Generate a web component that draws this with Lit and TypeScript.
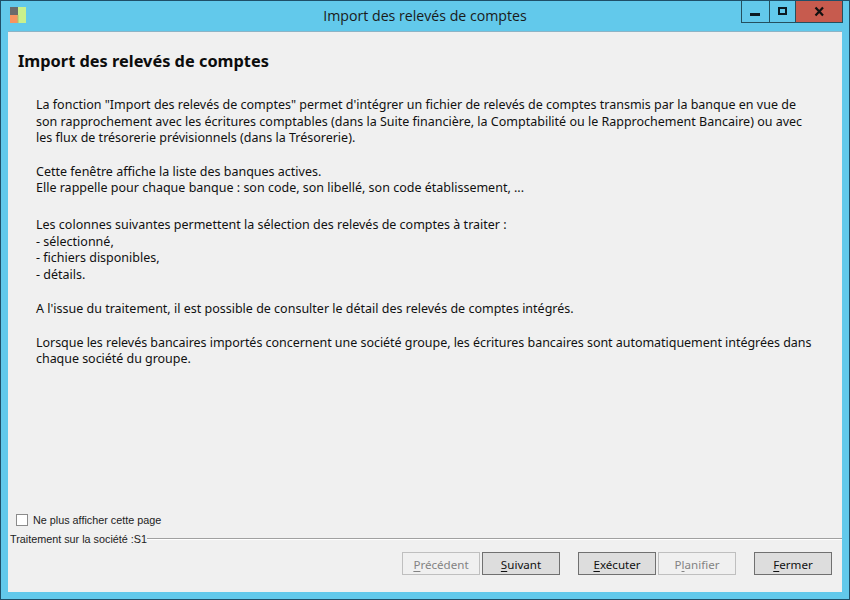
import { LitElement, html, css } from 'lit';
import { customElement } from 'lit/decorators.js';

@customElement('app-root')
export class AppRoot extends LitElement {
  static styles = css`
    :host {
      display: block;
      width: 850px;
      height: 600px;
      overflow: hidden;
    }
    .window {
      box-sizing: border-box;
      width: 850px;
      height: 600px;
      display: flex;
      flex-direction: column;
      background: #62c9eb;
      border: 1px solid #1f4f68;
      padding: 0 7px 7px 7px;
      font-family: 'Noto Sans', 'DejaVu Sans', sans-serif;
      color: #111;
    }
    .titlebar {
      height: 30px;
      flex: none;
      display: flex;
      align-items: flex-start;
      position: relative;
    }
    .app-icon {
      margin: 6px 0 0 2px;
      flex: none;
    }
    .title {
      position: absolute;
      left: 0;
      right: 0;
      top: 5px;
      text-align: center;
      font-size: 14.15px;
      line-height: 20px;
      color: #1a1a1a;
      font-family: 'Open Sans', 'Noto Sans', sans-serif;
    }
    .controls {
      margin-left: auto;
      margin-right: -1px;
      display: flex;
      height: 21px;
      border: 1px solid #24505f;
      border-top: none;
    }
    .ctl {
      display: flex;
      align-items: center;
      justify-content: center;
      width: 27px;
      border-right: 1px solid #24505f;
    }
    .ctl.narrow {
      width: 25px;
    }
    .ctl.close {
      width: 46px;
      border-right: none;
      background: #c75b4e;
    }
    .client {
      flex: 1;
      display: flex;
      flex-direction: column;
      background: #f0f0f0;
      border-top: 1px solid #8db4c6;
      min-height: 0;
    }
    h1 {
      margin: 18px 0 0 10px;
      font-size: 16.35px;
      line-height: 22px;
      font-weight: 700;
      color: #0c0c0c;
      font-family: 'Noto Sans', sans-serif;
    }
    .body {
      margin: 25px 10px 0 28px;
      font-size: 12.5px;
      line-height: 16.67px;
      white-space: nowrap;
      flex: 1;
    }
    p {
      margin: 0 0 16.67px 0;
    }
    p.wide {
      margin-bottom: 20px;
    }
    p.list {
      margin-bottom: 17.5px;
    }
    p.tight {
      letter-spacing: -0.04px;
    }
    .check-row {
      display: flex;
      align-items: center;
      gap: 5px;
      margin-left: 8px;
      font-family: 'Liberation Sans', Arial, sans-serif;
      font-size: 10.8px;
      line-height: 14px;
      color: #222;
      margin-bottom: 5px;
    }
    .box {
      width: 10px;
      height: 10px;
      box-sizing: content-box;
      background: #fff;
      border: 1px solid #8b8b8b;
    }
    .status {
      display: flex;
      align-items: center;
      margin-left: 2px;
      font-family: 'Liberation Sans', Arial, sans-serif;
      font-size: 10.8px;
      line-height: 14px;
      color: #222;
    }
    .status .rule {
      flex: 1;
      height: 1px;
      background: #a0a0a0;
      box-shadow: 0 1px 0 #fff;
      margin-bottom: 2px;
    }
    .buttons {
      display: flex;
      justify-content: flex-end;
      margin: 6px 10px 17px 0;
      gap: 2px;
    }
    button {
      box-sizing: border-box;
      width: 78px;
      height: 23px;
      padding: 2px 0 0;
      font: inherit;
      font-size: 11.6px;
      line-height: 19px;
      color: #111;
      background: #dddddd;
      border: 1px solid #707070;
    }
    button[disabled] {
      color: #838383;
      background: #f0f0f0;
      border-color: #bfbfbf;
    }
    button u {
      text-underline-offset: 2px;
    }
    .sep-a {
      margin-left: 16px;
    }
  `;

  render() {
    return html`
      <div class="window">
        <div class="titlebar">
          <svg class="app-icon" width="16" height="16" viewBox="0 0 16 16">
            <rect x="0" y="0" width="8" height="8" fill="#6b6b6b"></rect>
            <rect x="0" y="8" width="8" height="8" fill="#f79460"></rect>
            <rect x="8" y="0" width="8" height="16" fill="#c9f08c"></rect>
            <rect x="7.5" y="8" width="1" height="8" fill="#a8c070"></rect>
          </svg>
          <div class="title">Import des relevés de comptes</div>
          <div class="controls">
            <div class="ctl">
              <svg width="11" height="11" viewBox="0 0 11 11"><rect x="0" y="7" width="10" height="3" fill="#0b1a22"></rect></svg>
            </div>
            <div class="ctl narrow">
              <svg width="11" height="11" viewBox="0 0 11 11"><path d="M1 1h9v8H1z M3 3v4h5V3z" fill="#0b1a22" fill-rule="evenodd"></path></svg>
            </div>
            <div class="ctl close">
              <svg width="11" height="11" viewBox="0 0 11 11"><path d="M1.5 1.5l7.5 8M9 1.5l-7.5 8" stroke="#111" stroke-width="2.2" fill="none"></path></svg>
            </div>
          </div>
        </div>
        <div class="client">
          <h1>Import des relevés de comptes</h1>
          <div class="body">
            <p>La fonction "Import des relevés de comptes" permet d'intégrer un fichier de relevés de comptes transmis par la banque en vue de<br>son rapprochement avec les écritures comptables (dans la Suite financière, la Comptabilité ou le Rapprochement Bancaire) ou avec<br>les flux de trésorerie prévisionnels (dans la Trésorerie).</p>
            <p class="wide">Cette fenêtre affiche la liste des banques actives.<br>Elle rappelle pour chaque banque : son code, son libellé, son code établissement, ...</p>
            <p class="list">Les colonnes suivantes permettent la sélection des relevés de comptes à traiter :<br>- sélectionné,<br>- fichiers disponibles,<br>- détails.</p>
            <p>A l'issue du traitement, il est possible de consulter le détail des relevés de comptes intégrés.</p>
            <p class="tight">Lorsque les relevés bancaires importés concernent une société groupe, les écritures bancaires sont automatiquement intégrées dans<br>chaque société du groupe.</p>
          </div>
          <div class="check-row"><span class="box"></span><span>Ne plus afficher cette page</span></div>
          <div class="status"><span>Traitement sur la société :S1</span><span class="rule"></span></div>
          <div class="buttons">
            <button disabled><u>P</u>récédent</button>
            <button><u>S</u>uivant</button>
            <button class="sep-a"><u>E</u>xécuter</button>
            <button disabled>P<u>l</u>anifier</button>
            <button class="sep-a"><u>F</u>ermer</button>
          </div>
        </div>
      </div>
    `;
  }
}
